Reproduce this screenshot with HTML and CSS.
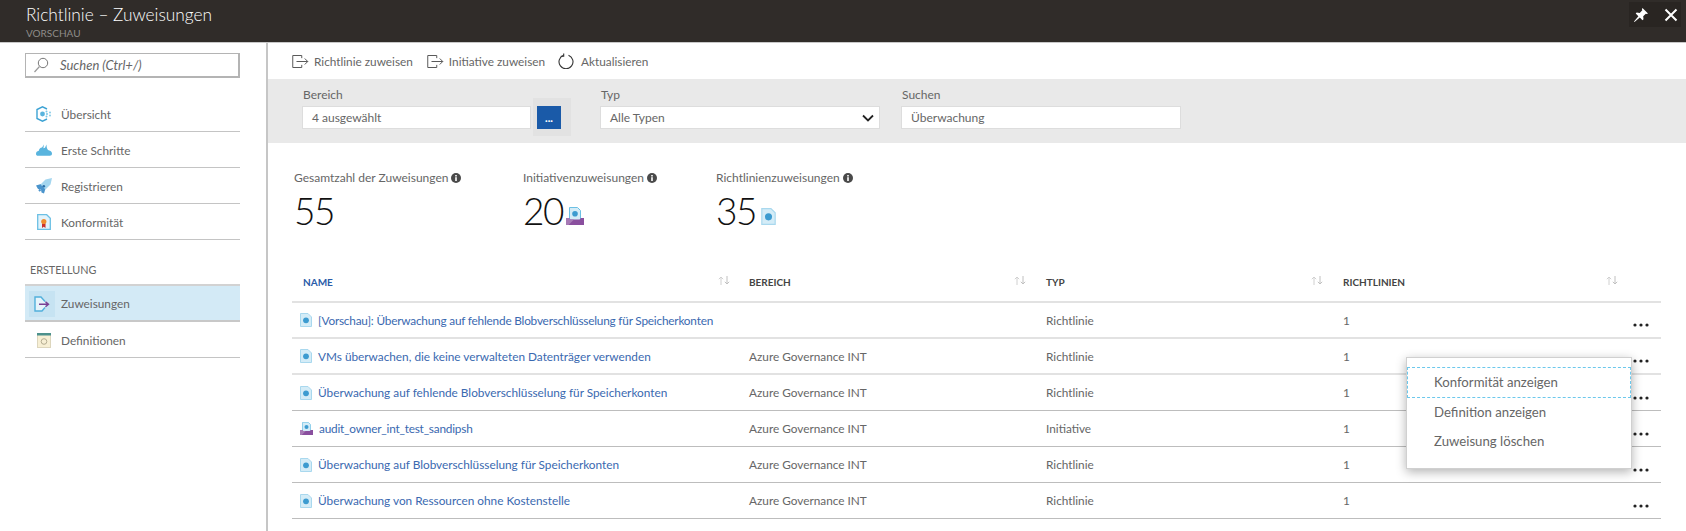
FILE: index.html
```html
<!DOCTYPE html>
<html lang="de">
<head>
<meta charset="utf-8">
<title>Richtlinie – Zuweisungen</title>
<link rel="stylesheet" href="styles.css">
</head>
<body>
<svg class="defs" width="0" height="0" aria-hidden="true">
  <symbol id="doc" viewBox="0 0 12 14">
    <path d="M.5.5h7.5l3.5 3.5v9.500h-11z" fill="#d4ecf7" stroke="#a9d8ee"/>
    <circle cx="6" cy="7.300" r="2.900" fill="#3c9bd0"/>
  </symbol>
  <symbol id="init" viewBox="0 0 18 18">
    <path d="M3.500.5h8l3 3v10h-11z" fill="#d4ecf7" stroke="#6cc0e4"/>
    <circle cx="9" cy="6.800" r="2.800" fill="#3c9bd0"/>
    <path d="M0 11h3l1.500 1.500h9L15 11h3v7H0z" fill="#8a4f9e"/>
    <path d="M0 11h3l1.500 1.500H8L2.500 18H0z" fill="#a67ab5"/>
  </symbol>
  <symbol id="assign" viewBox="0 0 24 18">
    <path d="M13 4.500V1H1v16h12v-3.500" fill="none" stroke="#555" stroke-width="1.300"/>
    <path d="M6 9h15M17 5l4 4-4 4" fill="none" stroke="#555" stroke-width="1.300"/>
  </symbol>
  <symbol id="info" viewBox="0 0 10 10">
    <circle cx="5" cy="5" r="5" fill="#4a4a4a"/>
    <rect x="4.200" y="4.200" width="1.600" height="3.800" fill="#fff"/>
    <rect x="4.200" y="2" width="1.600" height="1.500" fill="#fff"/>
  </symbol>
  <symbol id="sort" viewBox="0 0 12 9">
    <path d="M3 9V1M.8 3.200L3 1l2.200 2.200" fill="none" stroke="#d0d0d0"/>
    <path d="M9 0v8M6.800 5.800L9 8l2.200-2.200" fill="none" stroke="#c0c0c0"/>
  </symbol>
  <symbol id="dots" viewBox="0 0 16 4">
    <circle cx="2" cy="2" r="1.600" fill="#222"/>
    <circle cx="8" cy="2" r="1.600" fill="#222"/>
    <circle cx="14" cy="2" r="1.600" fill="#222"/>
  </symbol>
</svg>

<header class="topbar">
  <div class="titles">
    <div class="title">Richtlinie – Zuweisungen</div>
    <div class="subtitle">VORSCHAU</div>
  </div>
  <div class="winbtns">
    <svg class="pin" width="16" height="16" viewBox="0 0 16 16"><path d="M9.500 1l5.500 5.500-1.200.6-1-.4-2.600 2.600.3 3-1 1-2.700-2.700L1.500 15l-.5-.5 4.400-5.200L2.700 6.600l1-1 3 .3 2.600-2.600-.4-1z" fill="#fff"/></svg>
    <svg class="close" width="14" height="14" viewBox="0 0 14 14"><path d="M1.500 1.500l11 11M12.500 1.500l-11 11" stroke="#fff" stroke-width="2"/></svg>
  </div>
</header>

<div class="layout">
  <aside class="sidebar">
    <div class="search">
      <svg width="16" height="16" viewBox="0 0 16 16"><circle cx="10" cy="6" r="4.700" fill="none" stroke="#777"/><path d="M6.500 9.500L1.500 15" stroke="#999" stroke-width="1.200"/></svg>
      <span>Suchen (Ctrl+/)</span>
    </div>
    <nav class="nav">
      <a class="nav-item">
        <svg class="nav-icon" width="16" height="16" viewBox="0 0 16 16"><path d="M11 3L6.500 .8 1 3.500v9l5.500 2.700L11 13" fill="none" stroke="#3ea3d4" stroke-width="1.400"/><circle cx="6.500" cy="8" r="2.400" fill="#59b4de"/><g fill="#7cc6e6"><circle cx="10.500" cy="5.500" r="1"/><circle cx="11" cy="8" r="1"/><circle cx="10.500" cy="10.500" r="1"/><circle cx="14" cy="6.500" r=".9"/><circle cx="14" cy="9.500" r=".9"/></g></svg>
        <span>Übersicht</span>
      </a>
      <a class="nav-item">
        <svg class="nav-icon wide" width="16" height="12" viewBox="0 0 16 12"><path d="M0 10c0-1.800 1-3 2.800-3.300.3-1.700 1.500-3 3.200-3.200L8 .5 7.400 4.300 9 3.800l1.500-3.300c0 2 .3 4 1.500 5.500l2 .8c1.300.5 2 1.700 2 3 0 1-.8 2-2.200 2H2C.8 11.800 0 11 0 10z" fill="#59b4de"/></svg>
        <span>Erste Schritte</span>
      </a>
      <a class="nav-item">
        <svg class="nav-icon" width="16" height="16" viewBox="0 0 16 16"><path d="M0 7.500l5-1.500 4.500 4.500L8 15.500l-2.500-1-.5-3-3-.5z" fill="#4a94cc"/><path d="M16 0l-6.500 1.500L4.500 6.500l5 5 5-5z" fill="#a4d6ef"/><path d="M3 13l1.500-1.500" stroke="#4a94cc" stroke-width="2"/><circle cx="7.800" cy="8.200" r="1.300" fill="#2b6fa8"/></svg>
        <span>Registrieren</span>
      </a>
      <a class="nav-item">
        <svg class="nav-icon" width="14" height="16" viewBox="0 0 14 16"><path d="M.7.700h9l3.600 3.600v11H.7z" fill="#e3f3fb" stroke="#6cc0e4" stroke-width="1.300"/><path d="M5 9.500h3.500v4.500L6.700 12.800 5 14z" fill="#c9302c"/><circle cx="6.800" cy="7.500" r="2.600" fill="#f08c2e"/></svg>
        <span>Konformität</span>
      </a>
    </nav>
    <div class="group-label">ERSTELLUNG</div>
    <nav class="nav nav-group">
      <a class="nav-item active">
        <span class="icon-tile">
          <svg width="16" height="16" viewBox="0 0 16 16"><path d="M11 5.500L7 1H1v14h7l3-3.500" fill="#e6f4fb" stroke="#52b0dc" stroke-width="1.400"/><path d="M5 8.300h9.500M11.500 5.800l3 2.500-3 2.500" fill="none" stroke="#7a3f94" stroke-width="1.400"/></svg>
        </span>
        <span>Zuweisungen</span>
      </a>
      <a class="nav-item">
        <svg class="nav-icon" width="14" height="15" viewBox="0 0 14 15"><rect x=".5" y="1" width="13" height="13.500" fill="#f7efd4" stroke="#ddd6bd"/><rect x="0" y="0" width="14" height="2.500" fill="#4d918c"/><circle cx="7" cy="8.500" r="2.800" fill="none" stroke="#b5ad92"/></svg>
        <span>Definitionen</span>
      </a>
    </nav>
  </aside>

  <main class="content">
    <div class="toolbar">
      <a class="tool"><svg width="18" height="15"><use href="#assign"/></svg><span>Richtlinie zuweisen</span></a>
      <a class="tool"><svg width="18" height="15"><use href="#assign"/></svg><span>Initiative zuweisen</span></a>
      <a class="tool tool-refresh"><svg width="16" height="16" viewBox="0 0 16 16"><path d="M5.500 2.200a7 7 0 1 0 5 0" fill="none" stroke="#333" stroke-width="1.100"/><path d="M5.700 .4v2.900H2.800" fill="none" stroke="#333" stroke-width="1.100"/></svg><span>Aktualisieren</span></a>
    </div>

    <section class="filters">
      <div class="field field-scope">
        <label class="field-label">Bereich</label>
        <div class="scope-row">
          <div class="input">4 ausgewählt</div>
          <div class="pick-wrap"><button class="pick">...</button></div>
        </div>
      </div>
      <div class="field field-type">
        <label class="field-label">Typ</label>
        <div class="input select">
          <span>Alle Typen</span>
          <svg width="12" height="8" viewBox="0 0 12 8"><path d="M1 1.500l5 5 5-5" fill="none" stroke="#222" stroke-width="1.800"/></svg>
        </div>
      </div>
      <div class="field field-search">
        <label class="field-label">Suchen</label>
        <div class="input">Überwachung</div>
      </div>
    </section>

    <section class="stats">
      <div class="stat stat-total">
        <div class="stat-label">Gesamtzahl der Zuweisungen <svg width="10" height="10"><use href="#info"/></svg></div>
        <div class="stat-value">55</div>
      </div>
      <div class="stat stat-init">
        <div class="stat-label">Initiativenzuweisungen <svg width="10" height="10"><use href="#info"/></svg></div>
        <div class="stat-value">20<svg width="18" height="18"><use href="#init"/></svg></div>
      </div>
      <div class="stat">
        <div class="stat-label">Richtlinienzuweisungen <svg width="10" height="10"><use href="#info"/></svg></div>
        <div class="stat-value">35<svg class="stat-doc" width="15" height="17"><use href="#doc"/></svg></div>
      </div>
    </section>

    <section class="table">
      <div class="row head">
        <div class="cell name-head"><span>NAME</span><svg width="12" height="9"><use href="#sort"/></svg></div>
        <div class="cell"><span>BEREICH</span><svg width="12" height="9"><use href="#sort"/></svg></div>
        <div class="cell"><span>TYP</span><svg width="12" height="9"><use href="#sort"/></svg></div>
        <div class="cell last-head"><span>RICHTLINIEN</span><svg width="12" height="9"><use href="#sort"/></svg></div>
      </div>
      <div class="row soft">
        <div class="cell name"><svg width="12" height="14"><use href="#doc"/></svg><a class="tight">[Vorschau]: Überwachung auf fehlende Blobverschlüsselung für Speicherkonten</a></div>
        <div class="cell"></div>
        <div class="cell">Richtlinie</div>
        <div class="cell count"><span>1</span><svg class="more" width="16" height="4"><use href="#dots"/></svg></div>
      </div>
      <div class="row soft">
        <div class="cell name"><svg width="12" height="14"><use href="#doc"/></svg><a>VMs überwachen, die keine verwalteten Datenträger verwenden</a></div>
        <div class="cell">Azure Governance INT</div>
        <div class="cell">Richtlinie</div>
        <div class="cell count"><span>1</span><svg class="more" width="16" height="4"><use href="#dots"/></svg></div>
      </div>
      <div class="row">
        <div class="cell name"><svg width="12" height="14"><use href="#doc"/></svg><a>Überwachung auf fehlende Blobverschlüsselung für Speicherkonten</a></div>
        <div class="cell">Azure Governance INT</div>
        <div class="cell">Richtlinie</div>
        <div class="cell count"><span>1</span><svg class="more" width="16" height="4"><use href="#dots"/></svg></div>
      </div>
      <div class="row">
        <div class="cell name"><svg width="13" height="13"><use href="#init"/></svg><a class="tight">audit_owner_int_test_sandipsh</a></div>
        <div class="cell">Azure Governance INT</div>
        <div class="cell">Initiative</div>
        <div class="cell count"><span>1</span><svg class="more" width="16" height="4"><use href="#dots"/></svg></div>
      </div>
      <div class="row">
        <div class="cell name"><svg width="12" height="14"><use href="#doc"/></svg><a>Überwachung auf Blobverschlüsselung für Speicherkonten</a></div>
        <div class="cell">Azure Governance INT</div>
        <div class="cell">Richtlinie</div>
        <div class="cell count"><span>1</span><svg class="more" width="16" height="4"><use href="#dots"/></svg></div>
      </div>
      <div class="row">
        <div class="cell name"><svg width="12" height="14"><use href="#doc"/></svg><a>Überwachung von Ressourcen ohne Kostenstelle</a></div>
        <div class="cell">Azure Governance INT</div>
        <div class="cell">Richtlinie</div>
        <div class="cell count"><span>1</span><svg class="more" width="16" height="4"><use href="#dots"/></svg></div>
      </div>
    </section>

    <div class="menu">
      <a class="menu-item focus">Konformität anzeigen</a>
      <a class="menu-item">Definition anzeigen</a>
      <a class="menu-item">Zuweisung löschen</a>
    </div>
  </main>
</div>
</body>
</html>
```
FILE: styles.css
```css
* { box-sizing: border-box; }
html, body { margin: 0; height: 100%; overflow: hidden; }
body {
  width: 1686px;
  height: 531px;
  background: #fff;
  font-family: Lato, "Open Sans", "Liberation Sans", sans-serif;
  font-size: 12px;
  color: #555;
  display: flex;
  flex-direction: column;
}
svg { display: block; flex: none; }
.defs { position: absolute; }

.topbar {
  height: 43px;
  flex: none;
  background: #302c29;
  border-bottom: 1px solid #c8c8c8;
  padding-left: 26px;
  display: flex;
  justify-content: space-between;
}
.titles { padding-top: 4px; }
.title { color: #fff; font-size: 17.3px; font-weight: 300; line-height: 22px; }
.subtitle { color: #8f8c89; font-size: 10px; line-height: 11px; margin-top: 2px; }
.winbtns {
  width: 52px;
  height: 25px;
  margin: 2px 5px 0 0;
  background: #292522;
  display: flex;
  align-items: center;
  justify-content: space-between;
  padding: 0 3px 0 4px;
}

.layout { flex: 1; display: flex; min-height: 0; }
.sidebar {
  width: 268px;
  flex: none;
  border-right: 2px solid #c6c6c6;
  padding: 10px 26px 0 25px;
}
.search {
  height: 25px;
  border: 1px solid #b4b4b4;
  border-bottom-width: 2px;
  border-right-width: 2px;
  display: flex;
  align-items: center;
  padding-left: 7px;
  gap: 11px;
  font-style: italic;
  font-size: 13px;
  color: #666;
}
.nav { margin-top: 18px; }
.nav-item {
  height: 36px;
  display: flex;
  align-items: center;
  border-bottom: 1px solid #c4c4c4;
  padding-left: 11px;
  font-size: 11.8px;
  padding-top: 1px;
  color: #666;
}
.nav-icon { width: 16px; margin-right: 9px; }
.group-label { margin-top: 23px; padding-left: 5px; font-size: 10.8px; line-height: 14px; color: #666; }
.nav-group { margin-top: 7px; border-top: 2px solid #d2d2d2; }
.nav-item.active {
  background: #d3eaf6;
  height: 36px;
  padding-left: 4px;
  border-bottom: 2px solid #c8c8c8;
}
.icon-tile {
  width: 26px;
  height: 26px;
  background: #c6e3f2;
  display: flex;
  align-items: center;
  justify-content: center;
  margin-right: 6px;
}

.content { flex: 1; position: relative; min-width: 0; }
.toolbar {
  height: 36px;
  display: flex;
  align-items: center;
  padding-left: 24px;
}
.tool { display: flex; align-items: center; gap: 4px; margin-right: 14px; color: #666; font-size: 11.8px; white-space: nowrap; }
.tool-refresh { gap: 7px; margin-left: -1px; }

.filters {
  height: 64px;
  background: #e9e9e9;
  display: flex;
  padding-left: 34px;
}
.field { display: flex; flex-direction: column; }
.field-label { font-size: 12px; line-height: 16px; margin-top: 8px; margin-bottom: 3px; padding-left: 1px; color: #666; }
.field-scope { width: 298px; }
.field-type { width: 301px; }
.field-search { width: 280px; }
.scope-row { display: flex; }
.input {
  height: 23px;
  background: #fff;
  border: 1px solid #ddd;
  display: flex;
  align-items: center;
  padding-left: 9px;
  font-size: 12px;
  color: #666;
}
.scope-row .input { width: 229px; }
.select { width: 280px; justify-content: space-between; padding-right: 5px; }
.pick-wrap {
  width: 38px;
  height: 38px;
  margin: -8px 0 0 2px;
  background: #e2e2e2;
  padding: 8px 0 0 4px;
}
.pick {
  display: block;
  width: 24px;
  height: 23px;
  background: #1a5aa8;
  border: 0;
  padding: 0;
  color: #fff;
  font: 900 11px/23px Lato, sans-serif;
}

.stats { display: flex; padding: 26px 0 0 26px; height: 120px; }
.stat-total { width: 229px; }
.stat-init { width: 193px; }
.stat-label { display: flex; align-items: center; gap: 3px; font-size: 12px; line-height: 18px; color: #666; white-space: nowrap; }
.stat-value {
  display: flex;
  align-items: flex-end;
  gap: 3px;
  margin-top: 3px;
  font-size: 37px;
  font-weight: 300;
  line-height: 42px;
  letter-spacing: -1.5px;
  color: #111;
}
.stat-value svg { margin-bottom: 7px; }
.stat-value .stat-doc { margin-left: 2px; }

.table { margin-left: 24px; width: 1369px; }
.row {
  display: grid;
  grid-template-columns: 457px 297px 297px 318px;
  height: 36px;
  border-bottom: 1px solid #bdbdbd;
  align-items: center;
  font-size: 11.8px;
  color: #666;
}
.row.soft { border-bottom: 2px solid #e2e2e2; }
.row.head {
  height: 40px;
  border-bottom: 2px solid #e2e2e2;
  font-size: 10px;
  font-weight: 700;
  color: #444;
}
.row.head .cell { display: flex; justify-content: flex-end; padding-right: 20px; position: relative; }
.row.head .cell span { margin-right: auto; }
.row.head .name-head { padding-left: 11px; color: #2a5ba8; padding-right: 19px; }
.row.head .last-head { padding-right: 43px; }
.name { display: flex; align-items: center; gap: 6px; padding-left: 8px; white-space: nowrap; }
.name a { color: #3a69b0; }
.name a.tight { letter-spacing: -.2px; }
.count { display: flex; align-items: center; justify-content: space-between; padding-right: 12px; }
.more { margin-top: 10px; }

.menu {
  position: absolute;
  left: 1138px;
  top: 314px;
  width: 226px;
  height: 112px;
  background: #fff;
  border: 1px solid #d0d0d0;
  box-shadow: 0 3px 10px rgba(0,0,0,.3);
  padding-top: 9px;
}
.menu-item {
  display: block;
  height: 29px;
  line-height: 28px;
  padding-left: 27px;
  font-size: 13.2px;
  color: #666;
}
.menu-item.focus { height: 31px; border: 1px dashed #6cc8ec; padding-left: 26px; }
```
